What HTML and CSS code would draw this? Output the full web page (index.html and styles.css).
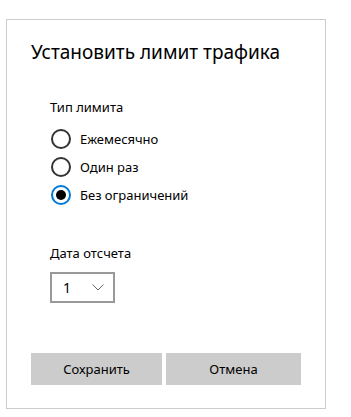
FILE: index.html
```html
<!DOCTYPE html>
<html lang="ru">
<head>
<meta charset="utf-8">
<title>Установить лимит трафика</title>
<link rel="stylesheet" href="styles.css">
</head>
<body>
<div class="dialog">
  <h1 class="title">Установить лимит трафика</h1>
  <div class="content">
    <div class="label">Тип лимита</div>
    <div class="radios">
      <div class="radio"><span class="circle"></span><span class="radio-text">Ежемесячно</span></div>
      <div class="radio"><span class="circle"></span><span class="radio-text">Один раз</span></div>
      <div class="radio checked"><span class="circle"></span><span class="radio-text">Без ограничений</span></div>
    </div>
    <div class="label date-label">Дата отсчета</div>
    <div class="select">
      <span class="select-value">1</span>
      <svg class="chevron" width="12" height="7" viewBox="0 0 12 7"><path d="M0.5 0.5 L6 6 L11.5 0.5" fill="none" stroke="#666" stroke-width="1"/></svg>
    </div>
  </div>
  <div class="buttons">
    <button class="btn">Сохранить</button>
    <button class="btn">Отмена</button>
  </div>
</div>
</body>
</html>
```
FILE: styles.css
```css
html, body {
  margin: 0;
  padding: 0;
  background: #fff;
}
body {
  font-family: "Noto Sans", "Open Sans", sans-serif;
  color: #000;
  padding: 19px 0 0 6px;
}
.dialog {
  box-sizing: border-box;
  width: 320px;
  height: 390px;
  border: 1px solid #cccccc;
  display: flex;
  flex-direction: column;
}
.title {
  margin: 0;
  padding: 18px 0 0 24px;
  font-size: 19px;
  line-height: 28px;
  font-weight: 400;
  color: #000;
}
.content {
  padding: 32px 0 0 43px;
}
.label {
  font-size: 13px;
  line-height: 18px;
}
.radios {
  display: flex;
  flex-direction: column;
  gap: 8px;
  margin-top: 13px;
}
.radio {
  display: flex;
  align-items: center;
  gap: 9px;
  height: 20px;
  font-size: 13px;
}
.circle {
  box-sizing: border-box;
  width: 20px;
  height: 20px;
  margin-left: 1px;
  border: 2px solid #333;
  border-radius: 50%;
  display: flex;
  align-items: center;
  justify-content: center;
}
.checked .circle {
  border-color: #0078d7;
}
.checked .circle::after {
  content: "";
  width: 10px;
  height: 10px;
  border-radius: 50%;
  background: #000;
}
.date-label {
  margin-top: 39px;
}
.select {
  box-sizing: border-box;
  margin-top: 10px;
  width: 65px;
  height: 31px;
  border: 2px solid #999;
  display: flex;
  align-items: center;
  padding: 0 9px 0 11px;
  justify-content: space-between;
}
.select-value {
  font-size: 14px;
}
.buttons {
  margin-top: auto;
  display: grid;
  grid-template-columns: 131px 135px;
  gap: 4px;
  padding: 0 0 23px 24px;
}
.btn {
  height: 32px;
  border: none;
  background: #cccccc;
  font-family: "Noto Sans", "Open Sans", sans-serif;
  font-size: 13px;
  color: #000;
  padding: 0;
}
```
